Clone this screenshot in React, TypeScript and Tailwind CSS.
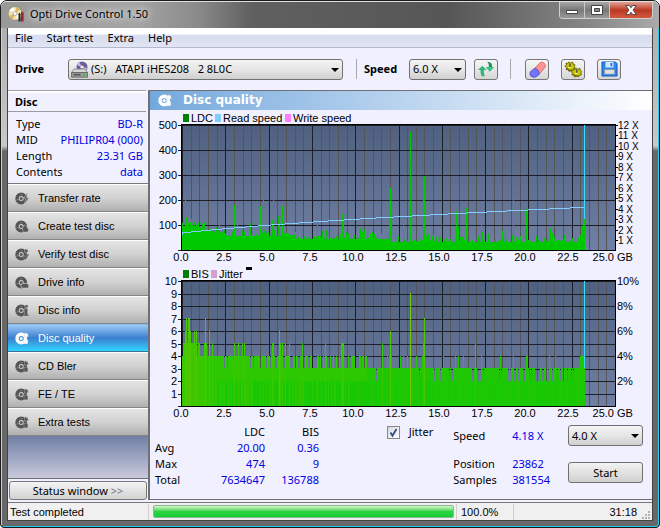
import React from 'react';

interface ToolButtonProps {
  label: string;
  className?: string;
  children: React.ReactNode;
}

interface PickerProps {
  id: string;
  label: string;
  options: string[];
  className: string;
}

type IconKind = 'bolt' | 'drop' | 'check' | 'drive' | 'info' | 'flower';

interface NavItem {
  label: string;
  icon: IconKind;
  active?: boolean;
}

const NAV_ITEMS: NavItem[] = [
  { label: 'Transfer rate', icon: 'bolt' },
  { label: 'Create test disc', icon: 'drop' },
  { label: 'Verify test disc', icon: 'check' },
  { label: 'Drive info', icon: 'drive' },
  { label: 'Disc info', icon: 'info' },
  { label: 'Disc quality', icon: 'flower', active: true },
  { label: 'CD Bler', icon: 'flower' },
  { label: 'FE / TE', icon: 'flower' },
  { label: 'Extra tests', icon: 'flower' },
];

const DISC_FACTS = [
  ['Type', 'BD-R'],
  ['MID', 'PHILIPR04 (000)'],
  ['Length', '23.31 GB'],
  ['Contents', 'data'],
];

// Plot geometry shared by both charts
const LEFT = 32;
const TOP = 15;
const WIDTH = 433;
const HEIGHT = 125;
const COLUMNS = 403;

const LDC_SPIKES: Record<number, number> = {
  2: 24, 3: 58, 4: 33, 52: 45, 55: 44, 68: 27, 78: 44, 81: 52, 90: 30, 91: 57, 96: 34, 97: 46, 100: 44,
  135: 42, 160: 36, 161: 41, 178: 22, 182: 20, 207: 40, 208: 62, 209: 30, 221: 46, 228: 118, 241: 71,
  242: 74, 274: 39, 276: 24, 284: 42, 299: 28, 300: 18, 320: 19, 331: 52, 343: 21, 344: 41, 367: 21,
  368: 22, 373: 21, 399: 18, 400: 24, 401: 26, 402: 31,
};

const BIS_PEAKS: Record<number, number> = {
  1: 5, 2: 5, 3: 6, 4: 7, 5: 5, 6: 7, 7: 7, 8: 6, 9: 5, 10: 5, 11: 5, 12: 6, 13: 5, 14: 6, 16: 5, 17: 5,
  22: 5, 23: 7, 24: 5, 27: 6, 30: 5, 52: 5, 56: 5, 60: 5, 62: 5, 90: 5, 91: 5, 97: 6, 98: 5, 100: 5, 103: 5,
  107: 5, 120: 5, 143: 5, 159: 5, 160: 5, 161: 5, 184: 4, 200: 5, 205: 4, 207: 4, 208: 6, 209: 4, 218: 4,
  221: 4, 225: 4, 228: 9, 234: 4, 240: 4, 241: 5, 242: 7, 261: 4, 273: 4, 276: 4, 281: 4, 293: 5, 299: 4,
  318: 4, 331: 4, 344: 4, 345: 4, 367: 4, 373: 4, 398: 4, 399: 4, 400: 4, 401: 4, 402: 4,
};

// Columns where the BIS count falls one below its surroundings
const BIS_DIPS: [number, number][] = [
  [42, 42], [45, 45], [68, 68], [71, 71], [78, 78], [84, 84], [88, 88], [93, 94], [101, 102], [108, 110],
  [113, 113], [116, 117], [121, 122], [126, 127], [130, 134], [137, 137], [139, 140], [142, 142], [145, 147],
  [149, 150], [152, 153], [155, 156], [158, 158], [162, 165], [167, 168], [173, 176], [179, 179], [182, 182],
  [194, 194], [237, 237], [252, 252], [258, 258], [267, 267], [269, 270], [290, 291], [295, 298], [301, 301],
  [317, 317], [319, 319], [326, 326], [328, 328], [332, 333], [336, 336], [341, 342], [347, 347], [349, 349],
  [353, 357], [360, 361], [364, 364], [366, 366], [370, 370], [375, 375], [378, 378], [381, 381], [385, 385],
  [389, 389], [391, 391],
];

const READ_SPEED: [number, number][] = [
  [0, 107], [9, 106], [19, 105], [29, 104], [40, 103], [52, 102], [64, 101], [76, 100], [89, 99], [103, 98],
  [117, 97], [131, 96], [146, 95], [162, 94], [178, 93], [194, 92], [212, 91], [230, 90], [248, 89], [266, 88],
  [285, 87], [305, 86], [325, 85], [346, 84], [367, 83], [388, 82], [402, 81],
];

const noise = (n: number) => {
  const value = Math.sin(n * 91.7 + 4.3) * 4375.85;
  return value - Math.floor(value);
};

const ldcHeight = (i: number) => {
  if (LDC_SPIKES[i]) return LDC_SPIKES[i];
  const floor = i < 3 ? 19 : i < 45 ? 26 - i * 0.25 : i < 110 ? 14 : i < 210 ? 11 : 8;
  const bump = Math.pow(noise(i), 3) * (i < 110 ? 8 : 9);
  return Math.round(floor + bump);
};

const bisLevel = (i: number) => {
  if (BIS_PEAKS[i]) return BIS_PEAKS[i];
  const level = i < 185 ? 4 : 3;
  return BIS_DIPS.some(([from, to]) => i >= from && i <= to) ? level - 1 : level;
};

const bisColor = (i: number, level: number) => {
  if (level >= 9) return '#74c800';
  if (level >= 6) return '#4cc800';
  if (level === 5 || i < 24) return '#38c800';
  return i < 185 ? '#2cc802' : '#1fc803';
};

const columns = Array.from({ length: COLUMNS }, (_, i) => i);

const PlotGrid: React.FC<{ rows: number }> = ({ rows }) => (
  <g shapeRendering="crispEdges">
    <rect x={LEFT} y={TOP} width={WIDTH} height={HEIGHT} fill="url(#plot)" />
    {Array.from({ length: 51 }, (_, i) => (
      <rect
        key={i}
        x={LEFT + Math.round((i * WIDTH) / 50)}
        y={TOP}
        width="1"
        height={HEIGHT}
        fill={i % 5 === 0 ? '#1c1f26' : '#555557'}
      />
    ))}
    {Array.from({ length: rows + 1 }, (_, i) => (
      <rect
        key={i}
        x={LEFT - 4}
        y={TOP + Math.round((i * HEIGHT) / rows)}
        width={WIDTH + 4}
        height="1"
        fill="#1c1f26"
      />
    ))}
    <path d={`M${LEFT - 1} ${TOP - 1}h${WIDTH + 1}v${HEIGHT + 1}h-${WIDTH + 1}z`} transform="translate(.5 .5)" fill="none" stroke="#000" />
  </g>
);

const XLabels: React.FC = () => (
  <g textAnchor="middle">
    {['0.0', '2.5', '5.0', '7.5', '10.0', '12.5', '15.0', '17.5', '20.0', '22.5'].map((text, i) => (
      <text key={text} x={LEFT - 1 + i * 43} y={TOP + 136}>
        {text}
      </text>
    ))}
    <text x="464" y={TOP + 136} textAnchor="end">25.0</text>
    <text x="467" y={TOP + 136} textAnchor="start">GB</text>
  </g>
);

const LdcChart: React.FC = () => (
  <svg
    viewBox="0 0 502 156"
    role="img"
    aria-label="LDC errors and read speed"
    className="block w-full font-['Liberation_Sans',sans-serif] text-[11px]"
  >
    <defs>
      <linearGradient id="plot" x1="0" y1="0" x2="0" y2="1">
        <stop offset="0" stopColor="#506080" />
        <stop offset="1" stopColor="#7080a4" />
      </linearGradient>
    </defs>
    <rect x="33" y="4" width="6" height="8" fill="#008000" />
    <text x="41" y="12">LDC</text>
    <rect x="65" y="4" width="6" height="8" fill="#80ccff" />
    <text x="73" y="12">Read speed</text>
    <rect x="135" y="4" width="6" height="8" fill="#ff80ff" />
    <text x="143" y="12">Write speed</text>
    <PlotGrid rows={5} />
    <g shapeRendering="crispEdges">
      {columns.map((i) => (
        <rect key={i} x={LEFT + i} y={TOP + HEIGHT - ldcHeight(i)} width="1" height={ldcHeight(i)} fill="#00c800" />
      ))}
      {READ_SPEED.slice(0, -1).map(([x, y], i) => (
        <rect key={x} x={LEFT + x} y={TOP + y} width={READ_SPEED[i + 1][0] - x} height="1" fill="#80ccff" />
      ))}
      <rect x={LEFT} y={TOP + 107} width="1" height="3" fill="#80ccff" />
      <rect x={LEFT + 402} y={TOP} width="1" height="94" fill="#30e0ff" />
      {Array.from({ length: 12 }, (_, i) => (
        <rect key={i} x={LEFT + WIDTH} y={TOP + Math.round((i * 115) / 11)} width="3" height="1" fill="#000" />
      ))}
    </g>
    <g textAnchor="end">
      {[500, 400, 300, 200, 100].map((value, i) => (
        <text key={value} x="27" y={TOP + 4 + i * 25}>{value}</text>
      ))}
    </g>
    <g className="text-[10px]">
      {Array.from({ length: 12 }, (_, i) => (
        <text key={i} x="468" y={TOP + 4 + Math.round((i * 115) / 11)}>{`${12 - i} X`}</text>
      ))}
    </g>
    <XLabels />
  </svg>
);

const BisChart: React.FC = () => (
  <svg
    viewBox="0 0 502 156"
    role="img"
    aria-label="BIS errors and jitter"
    className="block w-full font-['Liberation_Sans',sans-serif] text-[11px]"
  >
    <rect x="33" y="4" width="6" height="8" fill="#008000" />
    <text x="41" y="12">BIS</text>
    <rect x="61" y="4" width="6" height="8" fill="#d0a0d0" />
    <text x="69" y="12">Jitter</text>
    <rect x="96" y="1" width="6" height="3" fill="#000" />
    <PlotGrid rows={10} />
    <g shapeRendering="crispEdges">
      {columns.map((i) => {
        const level = bisLevel(i);
        const height = Math.round(level * 12.5);
        return (
          <g key={i}>
            <rect x={LEFT + i} y={TOP + HEIGHT - height} width="1" height={height} fill={bisColor(i, level)} />
            {noise(i + 7) > 0.35 && level < 5 && i > 34 && (
              <rect x={LEFT + i} y={TOP + HEIGHT - 25} width="1" height="25" fill="#18c804" />
            )}
          </g>
        );
      })}
      <rect x={LEFT + 402} y={TOP} width="1" height="87" fill="#30e0ff" />
    </g>
    <g textAnchor="end">
      {[10, 9, 8, 7, 6, 5, 4, 3, 2, 1].map((value, i) => (
        <text key={value} x="27" y={TOP + 4 + Math.round(i * 12.5)}>{value}</text>
      ))}
    </g>
    {['10%', '8%', '6%', '4%', '2%'].map((text, i) => (
      <text key={text} x="467" y={TOP + 4 + i * 25}>{text}</text>
    ))}
    <XLabels />
  </svg>
);

const DiscIcon: React.FC<{ kind: IconKind; className: string }> = ({ kind, className }) => (
  <svg viewBox="0 0 14 13" aria-hidden="true" className={className} fill="currentColor">
    <path fillRule="evenodd" d="M6.2.6a5.9 5.9 0 1 0 0 11.8A5.9 5.9 0 0 0 6.2.6Zm0 3.4a2.5 2.5 0 1 1 0 5 2.5 2.5 0 0 1 0-5Z" />
    <circle cx="6.2" cy="6.5" r="1.5" />
    <path d="M6.2 3.6v-2M3.6 7.4l-2.2.8" stroke="#fff" strokeOpacity=".4" strokeWidth=".7" />
    {kind === 'bolt' && <path d="M12.6.8 8.5 6.4h2.2L9.5 12l4.3-6.2h-2.4z" stroke="#ccc" strokeWidth=".5" />}
    {kind === 'drop' && <path d="M9.5 4.8c-1 2-2.5 3.2-2 5.2.6 2.3 2.5 2 2.8 2h1.2c1.4 0 2-1 2-2.1 0-2-2-2.5-4-5.1z" stroke="#ccc" strokeWidth=".5" />}
    {kind === 'check' && <path d="m7.5 9 1.5-1.5 1.3 1.5 2.9-3.2.8 1-3.5 5.2zM10.5.5l1 1 1.5-.3-.4 1.4 1 1-1.5.4-.6 1.4-.9-1.2-1.5-.1.8-1.3z" stroke="#ccc" strokeWidth=".4" />}
    {kind === 'drive' && <path d="m7 7.5-.8 2v2.6h7.5V9.5l-1.2-2z" stroke="#ccc" strokeWidth=".7" />}
    {kind === 'info' && <path d="M10 1h3v2.4h-3zM9 4.6h3.6v5.8h1.2V12H8.7v-1.6h1V6.2H9z" stroke="#ccc" strokeWidth=".4" />}
    {kind === 'flower' && (
      <g>
        <path d="m10.5.7 1 1.1 1.6-.2-.4 1.5.9 1.1-1.5.5-.6 1.4-1-1.2-1.5-.1.8-1.3-.6-1.5z" stroke="#ccc" strokeWidth=".4" />
        <path d="M9 7.6h3.8v4.2H9z" stroke="#ccc" strokeWidth=".3" />
      </g>
    )}
  </svg>
);

const ToolButton: React.FC<ToolButtonProps> = ({ label, className = '', children }) => (
  <button
    type="button"
    aria-label={label}
    className={`flex h-[21px] w-6 items-center justify-center rounded-[3px] border border-[#777] bg-gradient-to-b from-[#f6f6f6] to-[#d6d6d6] ${className}`}
  >
    {children}
  </button>
);

const Picker: React.FC<PickerProps> = ({ id, label, options, className }) => (
  <div className="relative">
    <select
      id={id}
      aria-label={label}
      className={`block h-[21px] w-full appearance-none rounded-[3px] border border-[#707070] bg-gradient-to-b from-[#f3f3f3] via-[#e6e6e6] to-[#cfcfcf] text-[11px] leading-4 text-black ${className}`}
    >
      {options.map((option) => (
        <option key={option}>{option}</option>
      ))}
    </select>
    <svg viewBox="0 0 8 4" aria-hidden="true" className="pointer-events-none absolute top-[9px] right-1 h-1 w-2">
      <path d="M0 0h8L4 4z" />
    </svg>
  </div>
);

const TitleBar: React.FC = () => (
  <header className="flex h-[26px] items-start justify-between pl-px">
    <div className="flex items-center gap-1.5 pt-1">
      <svg viewBox="0 0 16 16" aria-hidden="true" className="h-4 w-4">
        <circle cx="7" cy="7.5" r="6.8" fill="#eee2b5" stroke="#8d8468" strokeWidth=".6" />
        <path d="M7 7.5 1.5 4.2A6.4 6.4 0 0 1 6 1.2zM7 7.5l5.8 2.6a6 6 0 0 1-3.3 3.4z" fill="#fffdf0" />
        <path d="M7 7.5 8.5 1.2a6 6 0 0 1 3.5 2zM7 7.5 4.4 13.4A6 6 0 0 1 1.3 10z" fill="#dab65f" />
        <circle cx="7" cy="7.5" r="2" fill="#fff" stroke="#9a937c" strokeWidth=".7" />
        <path d="M10.5 15.5V8.3l1-1.8 1 1.8v7.2z" fill="#262626" />
        <path d="M13 15.5V7.2c0-2 2.6-2 2.6 0v8.3z" fill="#9b2626" />
      </svg>
      <h1 className="text-[11px] leading-4 text-black [text-shadow:0_0_6px_#fff,0_0_8px_#ddd]">Opti Drive Control 1.50</h1>
    </div>
    <div className="flex h-[17px] overflow-hidden rounded-b-[4px] border border-t-0 border-[#d0d0d0]">
      <button type="button" aria-label="Minimize" className="flex w-[25px] items-center justify-center border-r border-[#c8c8c8] bg-gradient-to-b from-[#a8a8a8] via-[#777] to-[#999]">
        <svg viewBox="0 0 12 12" aria-hidden="true" className="h-3 w-3">
          <path d="M.5 6.5h11v3H.5z" fill="#fff" stroke="#444" />
        </svg>
      </button>
      <button type="button" aria-label="Maximize" className="flex w-[25px] items-center justify-center border-r border-[#c8c8c8] bg-gradient-to-b from-[#a8a8a8] via-[#777] to-[#999]">
        <svg viewBox="0 0 12 12" aria-hidden="true" className="h-3 w-3">
          <path d="M.5 1.5h11v9H.5z" fill="#fff" stroke="#444" />
          <path d="M3.5 4.5h5v3h-5z" fill="#888" stroke="#444" />
        </svg>
      </button>
      <button type="button" aria-label="Close" className="flex w-[42px] items-center justify-center bg-gradient-to-b from-[#e2a094] via-[#b93822] to-[#d4583e]">
        <svg viewBox="0 0 12 12" aria-hidden="true" className="h-3 w-3">
          <path d="M.7 1.5h3.6L6 3.8l1.7-2.3h3.6L8 6l3.3 4.5H7.7L6 8.2l-1.7 2.3H.7L4 6z" fill="#fff" stroke="#444" strokeWidth=".9" />
        </svg>
      </button>
    </div>
  </header>
);

const MenuBar: React.FC = () => (
  <nav className="flex h-5 gap-3.5 border-b border-[#b3b8cc] bg-gradient-to-b from-white from-30% via-[#d6dcee] via-40% to-[#e1e5f4] pl-[7px] text-[11px] leading-5">
    {['File', 'Start test', 'Extra', 'Help'].map((item) => (
      <button key={item} type="button">{item}</button>
    ))}
  </nav>
);

const Toolbar: React.FC = () => (
  <div className="flex h-[42px] items-center pl-[7px] text-[11px]">
    <label htmlFor="drive" className="w-[53px] font-bold">Drive</label>
    <div className="relative w-[275px]">
      <Picker id="drive" label="Drive" options={['(S:)\u00a0\u00a0\u00a0ATAPI iHES208\u00a0\u00a0\u00a02 8L0C']} className="pl-[22px]" />
      <svg viewBox="0 0 17 17" aria-hidden="true" className="pointer-events-none absolute top-0.5 left-[3px] h-[17px] w-[17px]">
        <circle cx="11" cy="6" r="5.5" fill="#6c5f9c" />
        <path d="m11 6-5-2 2-3zM11 6l5 1-2 3z" fill="#c9bfe8" />
        <circle cx="11" cy="6" r="1.6" fill="#eee" />
        <path d="m3 8-2.5 3.5h16L14 8z" fill="#d4d4d4" stroke="#777" strokeWidth=".7" />
        <path d="M.5 11.5h16v4.7H.5z" fill="#9b9b9b" stroke="#555" strokeWidth=".7" />
        <path d="M2.5 13.8h7" stroke="#333" />
        <path d="M12 12.8h2.5v2H12z" fill="#2bd32b" />
      </svg>
    </div>
    <div className="ml-[13px] h-5 border-l border-[#a8a8b0]" />
    <label htmlFor="speed" className="w-[52px] pl-[7px] font-bold">Speed</label>
    <div className="w-[57px]">
      <Picker id="speed" label="Speed" options={['6.0 X', '4.0 X']} className="pl-[3px]" />
    </div>
    <ToolButton label="Refresh" className="ml-2">
      <svg viewBox="0 0 16 16" aria-hidden="true" className="h-4 w-4">
        <path d="M4.3 4.8 0 9h2.5c0 2.500.2 4.200 1.200 6.200h3.200C5.800 13 5.900 11 6 9h2.700z" fill="#30b878" />
        <path d="M9 .8c4.300.1 5.300 2.200 5 5.200h2l-4.300 4.500L8 6h2.800c.3-2.600-.1-4-1.800-5.200z" fill="#248b59" />
        <path d="m8 6 3.7 4.5L16 6z" fill="#38c884" />
      </svg>
    </ToolButton>
    <div className="mr-3.5 ml-3 h-5 border-l border-[#a8a8b0]" />
    <div className="flex gap-3">
      <ToolButton label="Erase disc">
        <svg viewBox="0 0 17 17" aria-hidden="true" className="h-[17px] w-[17px]">
          <path d="M5.500 7.500 11 1.800c2-1.800 6.300.5 5.200 4.200L10 13.500z" fill="#ff9292" stroke="#d25860" strokeWidth=".8" />
          <path d="M5.500 7.500c2.200-.5 4.800 2.500 4.500 6-2 2.700-4.500 3-6.800 2.400C.7 15 .5 12 1.600 10.500z" fill="#7474ff" stroke="#4444bb" strokeWidth=".8" />
        </svg>
      </ToolButton>
      <ToolButton label="Options">
        <svg viewBox="0 0 18 17" aria-hidden="true" className="h-[17px] w-[18px]">
          <g fill="#c9c400" stroke="#66620a" strokeWidth=".9">
            <path d="m2 2 2 .4L5 .8l1.400 1.400L8.800 1l.4 2.200 1.800.6-.7 1.800 1 1.600-1.900.7-.5 2.200-2-.6-1.800 1-.8-1.800-2.300-.3.7-1.800L.8 5.200l1.700-1z" />
            <path d="m9.300 8 1.800.5 1.200-1.600 1.300 1.400 2.400-.8.3 2 1.500 1-1 1.500.7 1.800-2 .3-1 1.800-1.800-.7-2 .8-.7-1.800-2.200-.4.8-1.600L7 10.500l1.800-.8z" />
          </g>
          <path d="M6 2.500v3.500M12.800 8.500v3.500" stroke="#555" strokeWidth="1.500" />
          <path d="M2.500 7.200 5 9.300h3M9 13.500l2.500 1.500h3.500" fill="none" stroke="#6a660c" strokeWidth="1.200" />
          <path d="M4 6.500h3.800M10.800 12.300h3.800" stroke="#f4f184" />
        </svg>
      </ToolButton>
      <ToolButton label="Save">
        <svg viewBox="0 0 17 16" aria-hidden="true" className="h-4 w-[17px]">
          <path d="M1 1h13.500L16 2.500V15H1z" fill="#2888f5" stroke="#1557bb" />
          <path d="M4.500 1h8v5.500h-8z" fill="#d4e6ff" />
          <path d="M9.500 2h1.700v3.200H9.500z" fill="#2468c9" />
          <path d="M3.500 8.500h10v4.700h-10z" fill="#e0e0e0" stroke="#888" strokeWidth=".6" />
        </svg>
      </ToolButton>
    </div>
  </div>
);

const Sidebar: React.FC = () => (
  <aside className="flex w-[142px] shrink-0 flex-col border-r-2 border-[#707074]">
    <div className="mr-0.5 border-t border-[#a0a0a4]">
      <h2 className="border-t-2 border-b border-t-white border-b-[#9c9ca0] pl-[7px] text-[11px] leading-[18px] font-bold">Disc</h2>
    </div>
    <dl className="border-b border-[#777] pt-1 pr-[5px] pb-[3px] pl-2 text-[11px] leading-4">
      {DISC_FACTS.map(([name, value]) => (
        <div key={name} className="flex justify-between whitespace-nowrap">
          <dt>{name}</dt>
          <dd className="text-[#0000e0]">{value}</dd>
        </div>
      ))}
    </dl>
    <nav className="flex flex-col font-['Liberation_Sans',sans-serif] text-[11px]">
      {NAV_ITEMS.map((item) => (
        <button
          key={item.label}
          type="button"
          className={
            item.active
              ? 'flex h-7 items-center gap-[9px] border-y border-t-[#84bcf0] border-b-[#407090] bg-gradient-to-b from-[#9ccaf4] via-[#3a80d0] to-[#2cd4ff] pl-[7px] text-white'
              : 'flex h-7 items-center gap-[9px] border-y border-t-white border-b-[#858585] bg-gradient-to-b from-[#e4e4e4] via-[#d2d2d2] to-[#b0b0b0] pl-[7px] text-black'
          }
        >
          <DiscIcon kind={item.icon} className={item.active ? 'h-[13px] w-3.5 text-white' : 'h-[13px] w-3.5 text-[#555]'} />
          {item.label}
        </button>
      ))}
    </nav>
    <div className="min-h-10 flex-1 border-b border-[#707074] bg-gradient-to-b from-[#7080a4] to-[#cacadd]" />
    <button
      type="button"
      className="mx-px mt-0.5 h-[19px] rounded-[3px] border border-[#777] bg-gradient-to-b from-[#f4f4f4] to-[#d2d2d2] text-[11px] leading-4"
    >
      Status window <span className="text-[#777]">&gt;&gt;</span>
    </button>
  </aside>
);

const Results: React.FC = () => (
  <div className="flex items-start pt-0.5 pr-[9px] pl-[5px] text-[11px] leading-4">
    <table className="text-right">
      <thead>
        <tr>
          <th aria-label="Measure" className="w-[50px]" />
          <th scope="col" className="w-[60px] font-normal">LDC</th>
          <th scope="col" className="w-[54px] font-normal">BIS</th>
        </tr>
      </thead>
      <tbody>
        {[
          ['Avg', '20.00', '0.36'],
          ['Max', '474', '9'],
          ['Total', '7634647', '136788'],
        ].map(([name, ldc, bis]) => (
          <tr key={name}>
            <th scope="row" className="text-left font-normal">{name}</th>
            <td className="text-[#0000e0]">{ldc}</td>
            <td className="text-[#0000e0]">{bis}</td>
          </tr>
        ))}
      </tbody>
    </table>
    <label className="mr-5 ml-auto flex items-center gap-[9px]">
      <span className="relative block h-[13px] w-[13px]">
        <input type="checkbox" defaultChecked className="peer block h-[13px] w-[13px] appearance-none border border-[#888] bg-gradient-to-br from-[#d4d8dc] to-white" />
        <svg viewBox="0 0 13 13" aria-hidden="true" className="pointer-events-none invisible absolute inset-0 peer-checked:visible">
          <path d="m3.500 6.500 2 3.200L9.500 3" fill="none" stroke="#354a88" strokeWidth="1.800" />
        </svg>
      </span>
      Jitter
    </label>
    <dl className="grid grid-cols-[59px_auto] pt-1">
      <dt className="mb-3">Speed</dt>
      <dd className="mb-3 text-[#0000e0]">4.18 X</dd>
      <dt>Position</dt>
      <dd className="text-[#0000e0]">23862</dd>
      <dt>Samples</dt>
      <dd className="text-[#0000e0]">381554</dd>
    </dl>
    <div className="ml-[18px] flex w-[75px] flex-col gap-4 pt-px">
      <Picker id="test-speed" label="Test speed" options={['4.0 X', '6.0 X']} className="pl-[3px]" />
      <button type="button" className="h-[21px] rounded-[3px] border border-[#707070] bg-gradient-to-b from-[#f3f3f3] to-[#d0d0d0]">
        Start
      </button>
    </div>
  </div>
);

const StatusBar: React.FC = () => (
  <footer className="mt-0.5 flex h-[18px] items-center border-t border-[#777] bg-[#f0f0f0] font-['Liberation_Sans',sans-serif] text-[11px] leading-4">
    <span className="w-[141px] border-r border-[#d0d0d0] pl-0.5">Test completed</span>
    <div
      role="progressbar"
      aria-label="Test progress"
      aria-valuenow={100}
      className="mr-0.5 ml-1 h-[13px] flex-1 rounded-[2px] border border-[#8fb594] bg-gradient-to-b from-[#cdf8cd] via-[#2fd247] to-[#0fd030]"
    />
    <span className="w-[58px] border-x border-[#d0d0d0] pl-1">100.0%</span>
    <span className="flex w-[138px] items-center justify-end gap-1 pr-px">
      31:18
      <svg viewBox="0 0 10 10" aria-hidden="true" className="h-2.5 w-2.5 self-end" fill="#b4b4b4">
        <path d="M7 1h2v2H7zM7 4h2v2H7zM7 7h2v2H7zM4 4h2v2H4zM4 7h2v2H4zM1 7h2v2H1z" />
      </svg>
    </span>
  </footer>
);

const App: React.FC = () => (
  <div className="flex min-h-screen flex-col rounded-t-[7px] rounded-b-[4px] border border-[#1b1b1b] bg-[#686868] bg-[linear-gradient(to_bottom,#aaa_0,#c8c8c8_145px,transparent_150px)] px-1.5 pb-1.5 font-['Noto_Sans','Open_Sans',sans-serif] text-black shadow-[inset_1px_1px_0_#d0d0d0,inset_-1px_-1px_0_#28c8e8]">
    <div className="-mx-1.5 rounded-t-[6px] border-t border-[#e0e0e0] bg-[linear-gradient(to_right,#999_0,#a5a5a5_20%,#8a8a8a_30%,#606060_38%,#565656_68%,#888_90%,#aaa_100%)] px-1.5">
      <TitleBar />
    </div>
    <div className="flex flex-1 flex-col border border-t-0 border-[#444] bg-[#f0f0ff]">
      <MenuBar />
      <Toolbar />
      <div className="flex flex-1">
        <Sidebar />
        <main className="min-w-0 flex-1 border-y border-[#707074]">
          <div className="flex h-[19px] items-center gap-[11px] bg-gradient-to-r from-[#74a8dc] to-white pl-2 text-white">
            <DiscIcon kind="flower" className="h-[13px] w-3.5" />
            <h2 className="font-['DejaVu_Sans',sans-serif] text-[12px] leading-[19px] font-bold">Disc quality</h2>
          </div>
          <LdcChart />
          <BisChart />
          <Results />
        </main>
      </div>
      <StatusBar />
    </div>
  </div>
);

export default App;
